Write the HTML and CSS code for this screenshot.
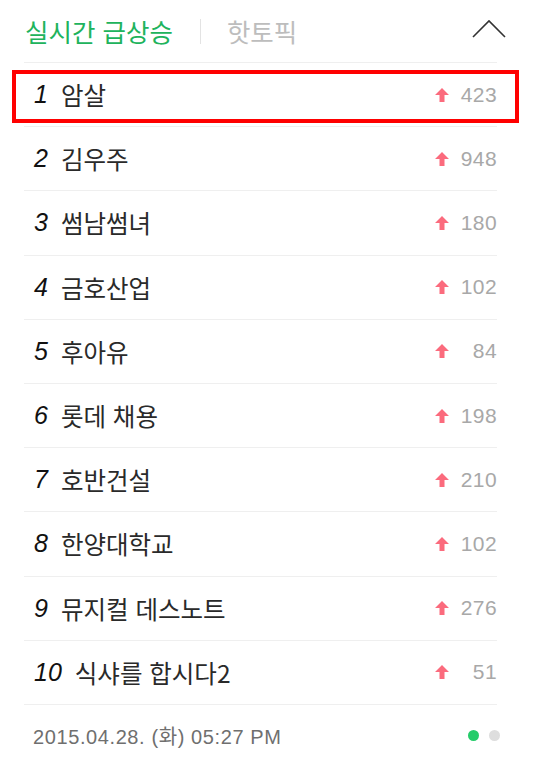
FILE: index.html
```html
<!DOCTYPE html>
<html lang="ko">
<head>
  <meta charset="UTF-8" />
  <meta name="viewport" content="width=device-width, initial-scale=1.0"/>
  <title>실시간 급상승</title>
  <link rel="stylesheet" href="styles.css">
</head>
<body>
  <div class="panel">
    <div class="tabs">
      <span class="tab active">실시간 급상승</span>
      <span class="sep"></span>
      <span class="tab">핫토픽</span>
      <svg class="fold" width="34" height="20" viewBox="0 0 34 20">
        <polyline points="1,18 17,2 33,18" fill="none" stroke="#333" stroke-width="1.6"/>
      </svg>
    </div>

    <ol class="rank">
      <li class="row picked">
        <span class="num">1</span><span class="word">암살</span>
        <span class="up"><svg width="14" height="14" viewBox="0 0 14 14"><polygon points="7,0 14,7 9.5,7 9.5,14 4.5,14 4.5,7 0,7"/></svg></span>
        <span class="count">423</span>
      </li>
      <li class="row">
        <span class="num">2</span><span class="word">김우주</span>
        <span class="up"><svg width="14" height="14" viewBox="0 0 14 14"><polygon points="7,0 14,7 9.5,7 9.5,14 4.5,14 4.5,7 0,7"/></svg></span>
        <span class="count">948</span>
      </li>
      <li class="row">
        <span class="num">3</span><span class="word">썸남썸녀</span>
        <span class="up"><svg width="14" height="14" viewBox="0 0 14 14"><polygon points="7,0 14,7 9.5,7 9.5,14 4.5,14 4.5,7 0,7"/></svg></span>
        <span class="count">180</span>
      </li>
      <li class="row">
        <span class="num">4</span><span class="word">금호산업</span>
        <span class="up"><svg width="14" height="14" viewBox="0 0 14 14"><polygon points="7,0 14,7 9.5,7 9.5,14 4.5,14 4.5,7 0,7"/></svg></span>
        <span class="count">102</span>
      </li>
      <li class="row">
        <span class="num">5</span><span class="word">후아유</span>
        <span class="up"><svg width="14" height="14" viewBox="0 0 14 14"><polygon points="7,0 14,7 9.5,7 9.5,14 4.5,14 4.5,7 0,7"/></svg></span>
        <span class="count">84</span>
      </li>
      <li class="row">
        <span class="num">6</span><span class="word">롯데 채용</span>
        <span class="up"><svg width="14" height="14" viewBox="0 0 14 14"><polygon points="7,0 14,7 9.5,7 9.5,14 4.5,14 4.5,7 0,7"/></svg></span>
        <span class="count">198</span>
      </li>
      <li class="row">
        <span class="num">7</span><span class="word">호반건설</span>
        <span class="up"><svg width="14" height="14" viewBox="0 0 14 14"><polygon points="7,0 14,7 9.5,7 9.5,14 4.5,14 4.5,7 0,7"/></svg></span>
        <span class="count">210</span>
      </li>
      <li class="row">
        <span class="num">8</span><span class="word">한양대학교</span>
        <span class="up"><svg width="14" height="14" viewBox="0 0 14 14"><polygon points="7,0 14,7 9.5,7 9.5,14 4.5,14 4.5,7 0,7"/></svg></span>
        <span class="count">102</span>
      </li>
      <li class="row">
        <span class="num">9</span><span class="word">뮤지컬 데스노트</span>
        <span class="up"><svg width="14" height="14" viewBox="0 0 14 14"><polygon points="7,0 14,7 9.5,7 9.5,14 4.5,14 4.5,7 0,7"/></svg></span>
        <span class="count">276</span>
      </li>
      <li class="row">
        <span class="num">10</span><span class="word">식샤를 합시다2</span>
        <span class="up"><svg width="14" height="14" viewBox="0 0 14 14"><polygon points="7,0 14,7 9.5,7 9.5,14 4.5,14 4.5,7 0,7"/></svg></span>
        <span class="count">51</span>
      </li>
    </ol>

    <div class="foot">
      <span class="stamp">2015.04.28. (화) 05:27 PM</span>
      <span class="dots"><i class="dot on"></i><i class="dot"></i></span>
    </div>
  </div>
</body>
</html>
```

FILE: styles.css
```css
:root {
  --green: #20b35c;
  --line: #efefef;
  --pink: #fb6b7d;
}

body {
  margin: 0;
  background: #fff;
  font-family: "Liberation Sans", "Noto Sans CJK KR", sans-serif;
  color: #222;
}

.panel {
  margin: 0 43px 0 24px;
}

.tabs {
  display: flex;
  align-items: center;
  height: 62px;
  border-bottom: 1px solid var(--line);
  padding-left: 1px;
}

.tab {
  font-family: "Noto Sans CJK KR", sans-serif;
  font-size: 25.5px;
  color: #bdbdbd;
  margin-top: -2px;
}

.tab.active {
  color: var(--green);
}

.sep {
  width: 1px;
  height: 25px;
  background: #e3e3e3;
  margin: 0 26px 0 27px;
}

.fold {
  margin-left: auto;
  margin-right: -9px;
  margin-top: -4px;
}

.rank {
  list-style: none;
  margin: 0;
  padding: 0;
}

.row {
  position: relative;
  display: flex;
  align-items: center;
  height: 63.2px;
  border-bottom: 1px solid var(--line);
  padding-left: 10px;
}

.picked::after {
  content: "";
  position: absolute;
  left: -12px;
  top: 7px;
  width: 507px;
  height: 53px;
  box-sizing: border-box;
  border: 4px solid #f00;
}

.num {
  font-style: italic;
  font-size: 25px;
  margin-right: 13px;
  color: #111;
}

.word {
  font-family: "Noto Sans CJK KR", sans-serif;
  font-size: 24.5px;
  color: #2a2a2a;
}

.up {
  margin-left: auto;
  display: flex;
  margin-right: 6px;
}

.up svg {
  fill: var(--pink);
}

.count {
  width: 42px;
  text-align: right;
  font-size: 21px;
  letter-spacing: 0.4px;
  color: #a8a8a8;
}

.foot {
  display: flex;
  align-items: center;
  height: 62px;
  padding-left: 9px;
}

.stamp {
  font-size: 20px;
  letter-spacing: 0.6px;
  color: #6f6f6f;
}

.dots {
  margin-left: auto;
  display: flex;
  gap: 10px;
  margin-right: -3px;
}

.dot {
  width: 11px;
  height: 11px;
  border-radius: 50%;
  background: #dedede;
}

.dot.on {
  background: #25cc6a;
}
```
